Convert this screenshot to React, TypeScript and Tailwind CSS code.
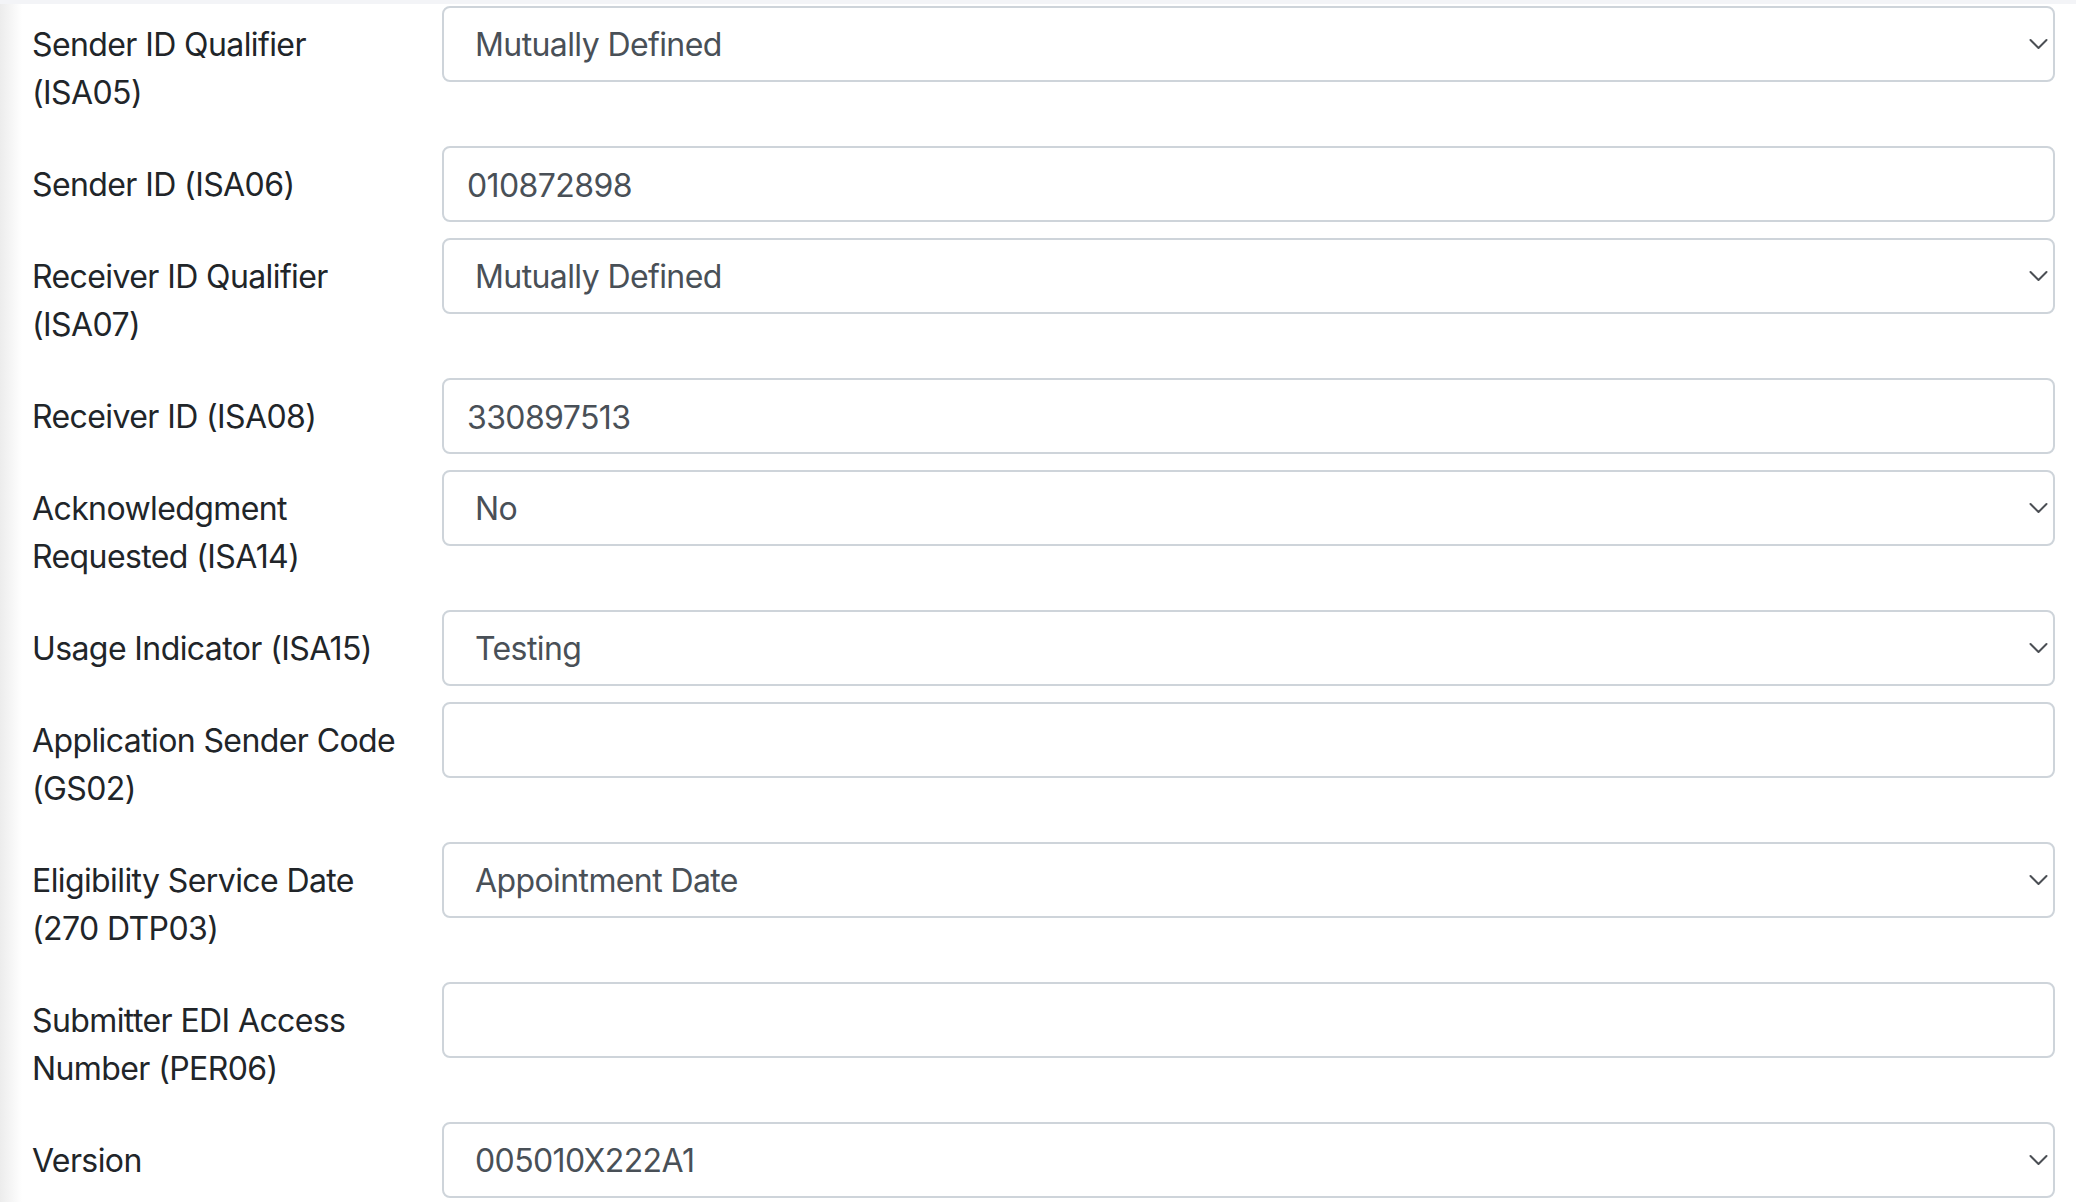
import React from 'react';

type Field = {
  label: string[];
  kind: 'select' | 'input';
  value: string;
};

const fields: Field[] = [
  { label: ['Sender ID Qualifier', '(ISA05)'], kind: 'select', value: 'Mutually Defined' },
  { label: ['Sender ID (ISA06)'], kind: 'input', value: '010872898' },
  { label: ['Receiver ID Qualifier', '(ISA07)'], kind: 'select', value: 'Mutually Defined' },
  { label: ['Receiver ID (ISA08)'], kind: 'input', value: '330897513' },
  { label: ['Acknowledgment', 'Requested (ISA14)'], kind: 'select', value: 'No' },
  { label: ['Usage Indicator (ISA15)'], kind: 'select', value: 'Testing' },
  { label: ['Application Sender Code', '(GS02)'], kind: 'input', value: '' },
  { label: ['Eligibility Service Date', '(270 DTP03)'], kind: 'select', value: 'Appointment Date' },
  { label: ['Submitter EDI Access', 'Number (PER06)'], kind: 'input', value: '' },
  { label: ['Version'], kind: 'select', value: '005010X222A1' },
];

function Chevron() {
  return (
    <svg
      className="pointer-events-none absolute right-[7px] top-1/2 -translate-y-1/2"
      width="19"
      height="11"
      viewBox="0 0 19 11"
      fill="none"
    >
      <polyline points="1.5,1.5 9.5,9.5 17.5,1.5" stroke="#4b4f54" strokeWidth="2" strokeLinecap="round" strokeLinejoin="round" />
    </svg>
  );
}

function FormRow({ field }: { field: Field }) {
  return (
    <div className="flex items-start mb-[16px]">
      <label className="w-[410px] shrink-0 pt-[15px] pb-[13px] text-[32px] leading-[48px] tracking-[-0.6px] text-[#212529]">
        {field.label.map((line, i) => (
          <div key={i}>{line}</div>
        ))}
      </label>
      <div className="relative flex-1">
        {field.kind === 'select' ? (
          <>
            <select
              defaultValue={field.value}
              className="block w-full h-[76px] appearance-none rounded-[8px] border-2 border-[#ced4da] bg-white pl-[31px] pr-[60px] pt-[2px] text-[32px] leading-[48px] tracking-[-0.6px] text-[#495057] outline-none"
            >
              <option>{field.value}</option>
            </select>
            <Chevron />
          </>
        ) : (
          <input
            readOnly
            value={field.value}
            className="block w-full h-[76px] rounded-[8px] border-2 border-[#ced4da] bg-white px-[23px] pt-[2px] text-[32px] leading-[48px] tracking-[-0.6px] text-[#495057] outline-none"
          />
        )}
      </div>
    </div>
  );
}

export default function App() {
  return (
    <div className="min-h-[1202px] bg-white font-['Inter','Noto_Sans',sans-serif]">
      <div className="h-[4px] bg-[#f3f4f7]" />
      <div className="flex">
        <div className="w-[22px] shrink-0 bg-gradient-to-r from-[#ececec] to-white" />
        <div className="flex-1 pl-[10px] pr-[21px] pt-[2px]">
          {fields.map((f, i) => (
            <FormRow key={i} field={f} />
          ))}
        </div>
      </div>
    </div>
  );
}
